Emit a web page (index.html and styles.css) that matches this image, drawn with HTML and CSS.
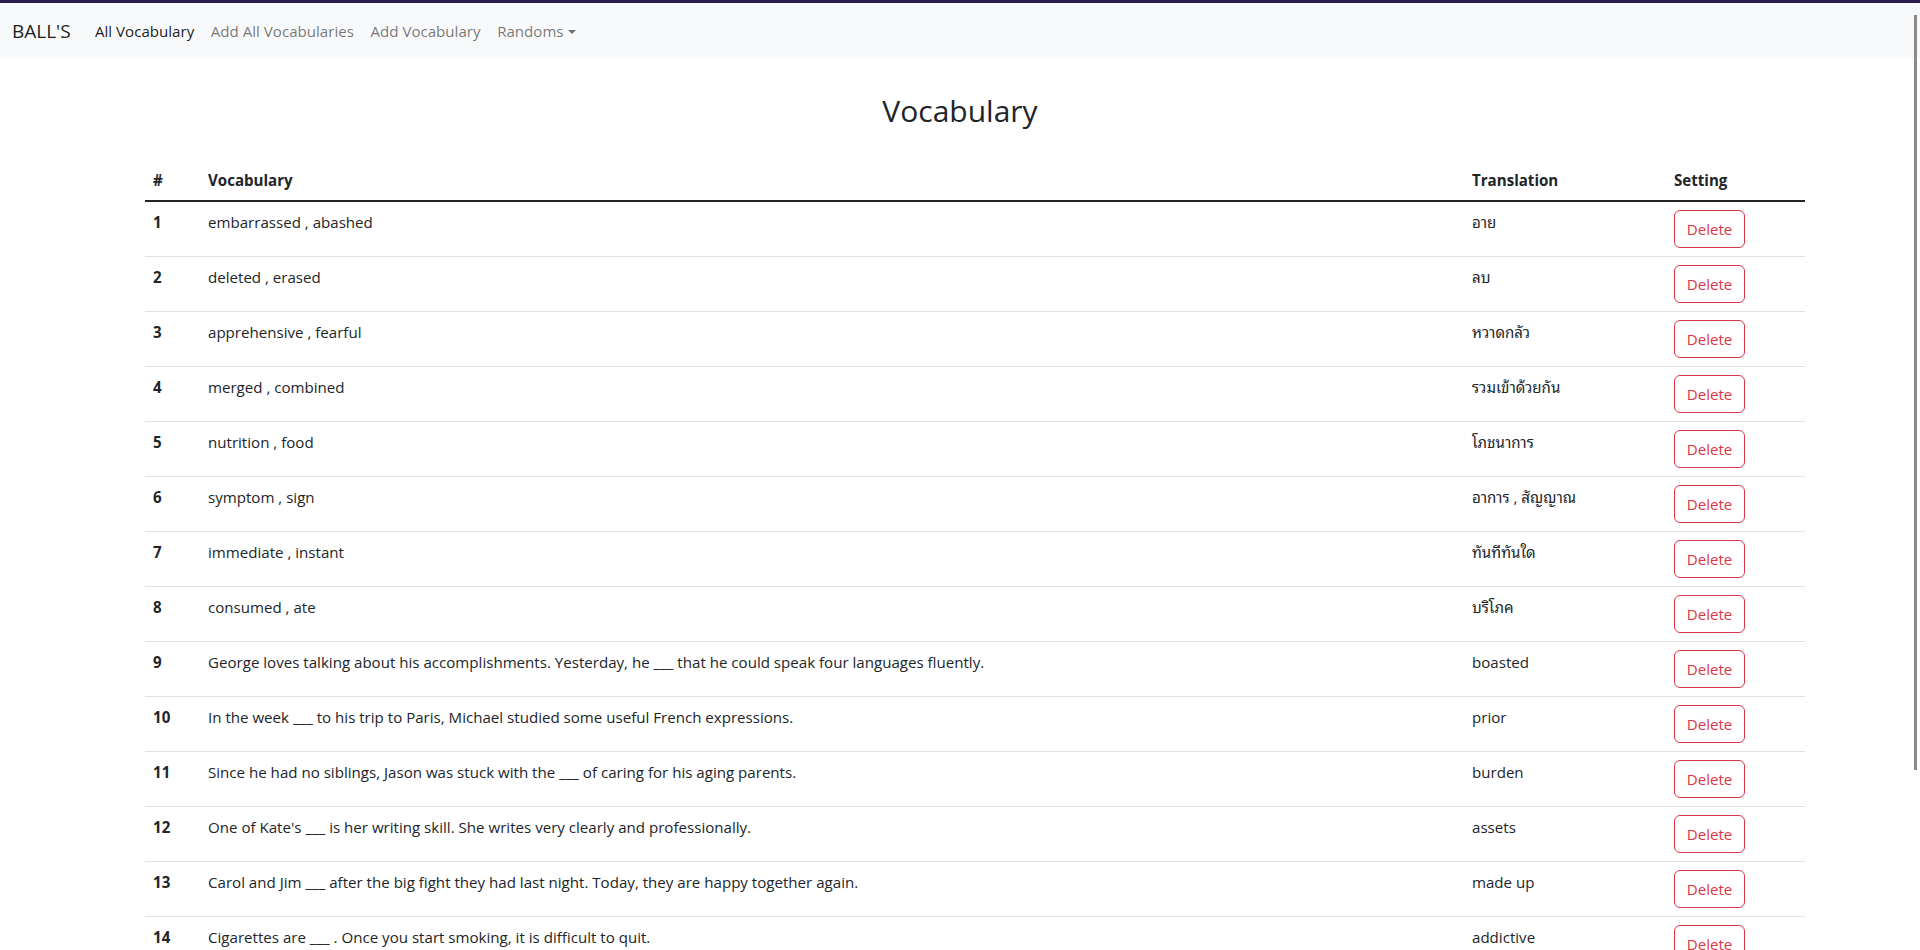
FILE: index.html
```html
<!DOCTYPE html>
<html lang="th">
<head>
<meta charset="utf-8">
<title>BALL'S Vocabulary</title>
<link rel="stylesheet" href="styles.css">
</head>
<body>
<div class="topline"></div>
<nav class="navbar">
  <a class="brand" href="#">BALL'S</a>
  <ul class="nav">
    <li><a class="nav-link active" href="#">All Vocabulary</a></li>
    <li><a class="nav-link" href="#">Add All Vocabularies</a></li>
    <li><a class="nav-link" href="#">Add Vocabulary</a></li>
    <li><a class="nav-link dropdown" href="#">Randoms<span class="caret"></span></a></li>
  </ul>
</nav>
<main>
  <h2 class="title">Vocabulary</h2>
  <div class="content">
    <table class="table">
      <thead>
        <tr>
          <th class="c-num">#</th>
          <th class="c-voc">Vocabulary</th>
          <th class="c-tr">Translation</th>
          <th class="c-set">Setting</th>
        </tr>
      </thead>
      <tbody>
        <tr><th>1</th><td>embarrassed , abashed</td><td>อาย</td><td><button class="btn-del">Delete</button></td></tr>
        <tr><th>2</th><td>deleted , erased</td><td>ลบ</td><td><button class="btn-del">Delete</button></td></tr>
        <tr><th>3</th><td>apprehensive , fearful</td><td>หวาดกลัว</td><td><button class="btn-del">Delete</button></td></tr>
        <tr><th>4</th><td>merged , combined</td><td>รวมเข้าด้วยกัน</td><td><button class="btn-del">Delete</button></td></tr>
        <tr><th>5</th><td>nutrition , food</td><td>โภชนาการ</td><td><button class="btn-del">Delete</button></td></tr>
        <tr><th>6</th><td>symptom , sign</td><td>อาการ , สัญญาณ</td><td><button class="btn-del">Delete</button></td></tr>
        <tr><th>7</th><td>immediate , instant</td><td>ทันทีทันใด</td><td><button class="btn-del">Delete</button></td></tr>
        <tr><th>8</th><td>consumed , ate</td><td>บริโภค</td><td><button class="btn-del">Delete</button></td></tr>
        <tr><th>9</th><td>George loves talking about his accomplishments. Yesterday, he ___ that he could speak four languages fluently.</td><td>boasted</td><td><button class="btn-del">Delete</button></td></tr>
        <tr><th>10</th><td>In the week ___ to his trip to Paris, Michael studied some useful French expressions.</td><td>prior</td><td><button class="btn-del">Delete</button></td></tr>
        <tr><th>11</th><td>Since he had no siblings, Jason was stuck with the ___ of caring for his aging parents.</td><td>burden</td><td><button class="btn-del">Delete</button></td></tr>
        <tr><th>12</th><td>One of Kate's ___ is her writing skill. She writes very clearly and professionally.</td><td>assets</td><td><button class="btn-del">Delete</button></td></tr>
        <tr><th>13</th><td>Carol and Jim ___ after the big fight they had last night. Today, they are happy together again.</td><td>made up</td><td><button class="btn-del">Delete</button></td></tr>
        <tr><th>14</th><td>Cigarettes are ___ . Once you start smoking, it is difficult to quit.</td><td>addictive</td><td><button class="btn-del">Delete</button></td></tr>
      </tbody>
    </table>
  </div>
</main>
<div class="scrollbar"></div>
</body>
</html>
```
FILE: styles.css
```css
* { box-sizing: border-box; }
html, body { margin: 0; padding: 0; }
body {
  font-family: "Open Sans", "Noto Sans Thai Looped", "Loma", "Garuda", "Tlwg Typo", "Noto Sans Thai", "Noto Sans", sans-serif;
  font-size: 15.1px;
  line-height: 24px;
  color: #212529;
  background: #fff;
  overflow: hidden;
}
.topline { height: 3px; background: #2a1b4d; }
.navbar {
  display: flex;
  align-items: center;
  background: #f8f9fa;
  height: 55px;
  padding: 0 12px;
}
.brand {
  font-size: 19px;
  color: rgba(0,0,0,.9);
  text-decoration: none;
  margin-right: 16px;
  line-height: 30px;
}
.nav { display: flex; list-style: none; margin: 0; padding: 0; }
.nav-link {
  display: block;
  padding: 8px 8.3px;
  color: rgba(0,0,0,.55);
  text-decoration: none;
}
.nav-link.active { color: rgba(0,0,0,.9); }
.caret {
  display: inline-block;
  margin-left: 4px;
  vertical-align: 3px;
  border-top: 4px solid;
  border-left: 4px solid transparent;
  border-right: 4px solid transparent;
}
.title {
  font-size: 30px;
  font-weight: 400;
  text-align: center;
  margin: 0;
  padding: 34px 0 30px;
  line-height: 38px;
}
.content { padding: 0 115px 0 145px; }
.table { width: 1660px; border-collapse: collapse; }
.table th, .table td {
  padding: 8px;
  text-align: left;
  vertical-align: top;
  border-bottom: 1px solid #dee2e6;
}
.table thead th { border-bottom: 2px solid #212529; font-weight: 700; }
.table tbody th { font-weight: 700; }
.c-num { width: 55px; }
.c-voc { width: 1264px; }
.c-tr { width: 202px; }
.c-set { width: 139px; }
.btn-del {
  font-family: inherit;
  font-size: 15.1px;
  line-height: 24px;
  width: 71px;
  padding: 6px 0;
  text-align: center;
  color: #dc3545;
  background: transparent;
  border: 1px solid #dc3545;
  border-radius: 6px;
}
.scrollbar {
  position: fixed;
  right: 3px;
  top: 15px;
  width: 3px;
  height: 755px;
  background: #8a8a8a;
}
```
